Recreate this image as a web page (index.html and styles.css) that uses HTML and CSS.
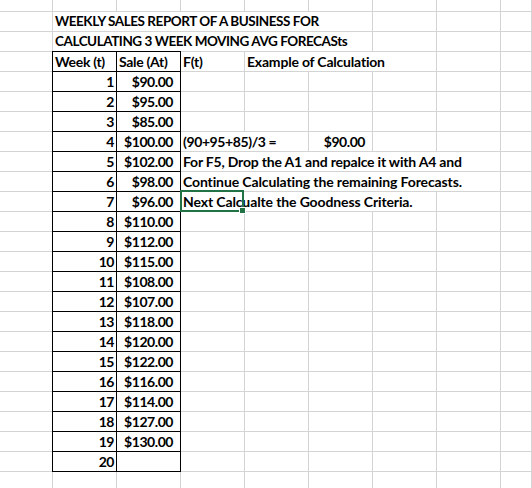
FILE: index.html
```html
<!DOCTYPE html>
<html>
<head>
<meta charset="utf-8">
<link rel="stylesheet" href="styles.css">
</head>
<body>
<div class="sheet">
  <div class="c"></div><div class="c"></div><div class="c"></div><div class="c"></div><div class="c"></div><div class="c"></div><div class="c"></div><div class="c"></div><div class="c"></div>

  <div class="c"></div><div class="c s5 caps">WEEKLY SALES REPORT OF A BUSINESS FOR</div><div class="c"></div><div class="c"></div><div class="c"></div>
  <div class="c"></div><div class="c s5 caps">CALCULATING 3 WEEK MOVING AVG FORECASts</div><div class="c"></div><div class="c"></div><div class="c"></div>

  <div class="c"></div><div class="c tb hd">Week (t)</div><div class="c tb hd">Sale (At)</div><div class="c">F(t)</div><div class="c s3">Example of Calculation</div><div class="c"></div><div class="c"></div>

  <div class="c"></div><div class="c tb num">1</div><div class="c tb cur">$90.00</div><div class="c"></div><div class="c"></div><div class="c"></div><div class="c"></div><div class="c"></div><div class="c"></div>
  <div class="c"></div><div class="c tb num">2</div><div class="c tb cur">$95.00</div><div class="c"></div><div class="c"></div><div class="c"></div><div class="c"></div><div class="c"></div><div class="c"></div>
  <div class="c"></div><div class="c tb num">3</div><div class="c tb cur">$85.00</div><div class="c"></div><div class="c"></div><div class="c"></div><div class="c"></div><div class="c"></div><div class="c"></div>
  <div class="c"></div><div class="c tb num">4</div><div class="c tb cur">$100.00</div><div class="c s2 fx">(90+95+85)/3 =</div><div class="c cur">$90.00</div><div class="c"></div><div class="c"></div><div class="c"></div>
  <div class="c"></div><div class="c tb num">5</div><div class="c tb cur">$102.00</div><div class="c s5">For F5, Drop the A1 and repalce it with A4 and</div><div class="c"></div>
  <div class="c"></div><div class="c tb num">6</div><div class="c tb cur">$98.00</div><div class="c s5 wide">Continue Calculating the remaining Forecasts.</div><div class="c"></div>
  <div class="c"></div><div class="c tb num">7</div><div class="c tb cur">$96.00</div><div class="c s4 active wide">Next Calcualte the Goodness Criteria.<span class="sel"></span></div><div class="c"></div><div class="c"></div>
  <div class="c"></div><div class="c tb num">8</div><div class="c tb cur">$110.00</div><div class="c"></div><div class="c"></div><div class="c"></div><div class="c"></div><div class="c"></div><div class="c"></div>
  <div class="c"></div><div class="c tb num">9</div><div class="c tb cur">$112.00</div><div class="c"></div><div class="c"></div><div class="c"></div><div class="c"></div><div class="c"></div><div class="c"></div>
  <div class="c"></div><div class="c tb num">10</div><div class="c tb cur">$115.00</div><div class="c"></div><div class="c"></div><div class="c"></div><div class="c"></div><div class="c"></div><div class="c"></div>
  <div class="c"></div><div class="c tb num">11</div><div class="c tb cur">$108.00</div><div class="c"></div><div class="c"></div><div class="c"></div><div class="c"></div><div class="c"></div><div class="c"></div>
  <div class="c"></div><div class="c tb num">12</div><div class="c tb cur">$107.00</div><div class="c"></div><div class="c"></div><div class="c"></div><div class="c"></div><div class="c"></div><div class="c"></div>
  <div class="c"></div><div class="c tb num">13</div><div class="c tb cur">$118.00</div><div class="c"></div><div class="c"></div><div class="c"></div><div class="c"></div><div class="c"></div><div class="c"></div>
  <div class="c"></div><div class="c tb num">14</div><div class="c tb cur">$120.00</div><div class="c"></div><div class="c"></div><div class="c"></div><div class="c"></div><div class="c"></div><div class="c"></div>
  <div class="c"></div><div class="c tb num">15</div><div class="c tb cur">$122.00</div><div class="c"></div><div class="c"></div><div class="c"></div><div class="c"></div><div class="c"></div><div class="c"></div>
  <div class="c"></div><div class="c tb num">16</div><div class="c tb cur">$116.00</div><div class="c"></div><div class="c"></div><div class="c"></div><div class="c"></div><div class="c"></div><div class="c"></div>
  <div class="c"></div><div class="c tb num">17</div><div class="c tb cur">$114.00</div><div class="c"></div><div class="c"></div><div class="c"></div><div class="c"></div><div class="c"></div><div class="c"></div>
  <div class="c"></div><div class="c tb num">18</div><div class="c tb cur">$127.00</div><div class="c"></div><div class="c"></div><div class="c"></div><div class="c"></div><div class="c"></div><div class="c"></div>
  <div class="c"></div><div class="c tb num">19</div><div class="c tb cur">$130.00</div><div class="c"></div><div class="c"></div><div class="c"></div><div class="c"></div><div class="c"></div><div class="c"></div>
  <div class="c"></div><div class="c tb num">20</div><div class="c tb cur"></div><div class="c"></div><div class="c"></div><div class="c"></div><div class="c"></div><div class="c"></div><div class="c"></div>

  <div class="c"></div><div class="c"></div><div class="c"></div><div class="c"></div><div class="c"></div><div class="c"></div><div class="c"></div><div class="c"></div><div class="c"></div>
</div>
</body>
</html>
```

FILE: styles.css
```css
html, body {
  margin: 0;
  padding: 0;
  overflow: hidden;
  background: #ffffff;
}

body {
  font-family: Lato, "Liberation Sans", sans-serif;
  font-weight: 700;
  font-size: 14px;
  letter-spacing: -0.2px;
  color: #000000;
}

.sheet {
  display: grid;
  grid-template-columns: 53px repeat(7, 64px) 1fr;
  grid-template-rows: 12px repeat(24, 20px);
  width: 100%;
}

.c {
  box-sizing: border-box;
  border-right: 1px solid #d4d4d4;
  border-bottom: 1px solid #d4d4d4;
  white-space: nowrap;
  padding: 0 2px;
  line-height: 19px;
  min-width: 0;
}

.s2 { grid-column: span 2; }
.s3 { grid-column: span 3; }
.s4 { grid-column: span 4; }
.s5 { grid-column: span 5; }

.caps {
  font-size: 13.5px;
  letter-spacing: -0.45px;
}

.wide {
  letter-spacing: -0.12px;
}

.fx {
  letter-spacing: -0.4px;
}

.tb {
  border-right-color: #000000;
  border-bottom-color: #000000;
  box-shadow: -1px 0 0 #000000, 0 -1px 0 #000000, -1px -1px 0 #000000;
  letter-spacing: -0.45px;
}

.hd {
  letter-spacing: -0.3px;
}

.num {
  text-align: right;
  padding-right: 2px;
}

.cur {
  text-align: right;
  padding-right: 7px;
  letter-spacing: -0.45px;
}

.active {
  position: relative;
}

.sel {
  position: absolute;
  left: -1px;
  top: -2px;
  width: 64px;
  height: 22px;
  box-sizing: border-box;
  border: 2px solid #217346;
  z-index: 2;
}

.sel::after {
  content: "";
  position: absolute;
  right: -4px;
  bottom: -4px;
  width: 5px;
  height: 5px;
  background: #217346;
  border: 1px solid #ffffff;
}
```
